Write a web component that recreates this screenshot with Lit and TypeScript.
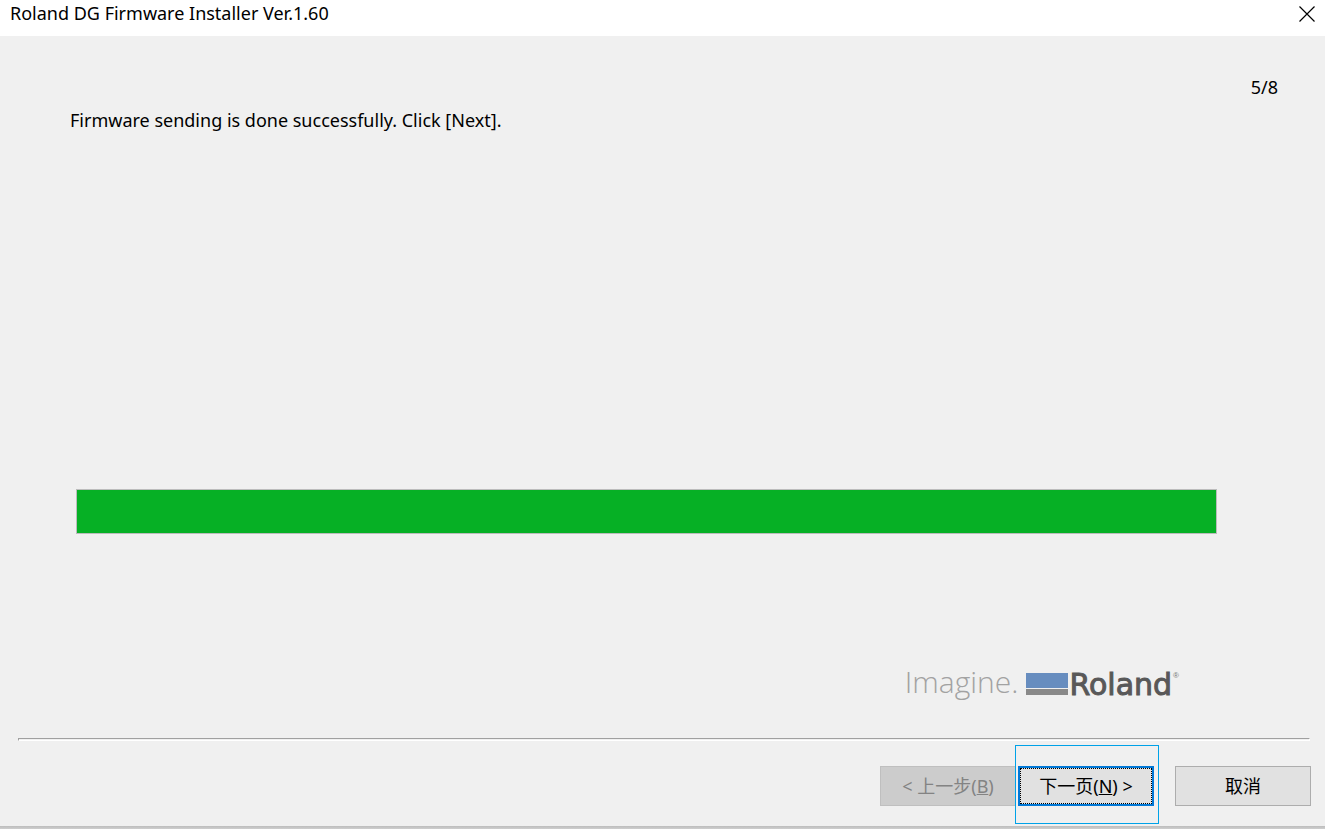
import { LitElement, html, css } from "lit";
import { customElement, property } from "lit/decorators.js";

@customElement("roland-logo")
class RolandLogo extends LitElement {
  static styles = css`
    :host { display: flex; align-items: center; gap: 8px; height: 44px; }
    .slogan { font: 300 30px/42px "Open Sans", sans-serif; color: #a2a2a2; }
    .brand { display: flex; align-items: center; gap: 1px; }
    .flag { width: 42px; height: 22px; display: block; margin-top: 4px; }
    .name { font: 30px/44px "DejaVu Sans", sans-serif; color: #585858; -webkit-text-stroke: 1px #585858; margin-top: 6px; }
    .mark { font: 8px/10px "Liberation Sans", sans-serif; color: #777; align-self: flex-start; margin-top: 14px; }
  `;
  render() {
    return html`
      <span class="slogan">Imagine.</span>
      <span class="brand">
        <svg class="flag" viewBox="0 0 42 22" aria-hidden="true">
          <rect width="42" height="15" fill="#678dbf"></rect>
          <rect y="16" width="42" height="6" fill="#898989"></rect>
        </svg>
        <span class="name">Roland</span>
        <span class="mark">®</span>
      </span>
    `;
  }
}

@customElement("app-root")
class AppRoot extends LitElement {
  @property({ type: Number }) step = 5;
  @property({ type: Number }) steps = 8;
  @property({ type: Number }) progress = 100;

  static styles = css`
    :host {
      display: flex; flex-direction: column; min-height: 100vh; box-sizing: border-box;
      background: #f0f0f0; color: #000;
      font: 18px/24px "Noto Sans", "Noto Sans CJK SC", sans-serif;
    }
    * { box-sizing: border-box; }
    .titlebar { display: flex; justify-content: space-between; height: 36px; padding: 2px 10px 0; background: #fff; }
    .title { margin: 0; font-size: 18px; line-height: 22px; font-weight: 400; }
    .close { width: 16px; height: 24px; padding: 0; border: 0; background: none; display: grid; place-items: center; }
    .close svg { display: block; }
    .page { flex: 1; display: flex; flex-direction: column; padding: 39px 47px 0 70px; }
    .count { margin: 0; text-align: right; }
    .message { margin: 9px 0 0; }
    .bar {
      appearance: none; display: block; width: auto; height: 45px; margin: auto 61px 126px 6px;
      border: 1px solid #bcbcbc; background: #e6e6e6;
    }
    .bar::-webkit-progress-bar { background: #e6e6e6; }
    .bar::-webkit-progress-value { background: #06b025; }
    .logo { align-self: flex-end; margin: 0 99px 34px 0; }
    .rule { height: 3px; margin: 0 15px 0 18px; border: solid; border-width: 1px; border-color: #a0a0a0 #fff #fff #a0a0a0; }
    .buttons { display: flex; justify-content: flex-end; padding: 25px 14px 20px; }
    .btn {
      display: block; width: 136px; height: 40px; padding: 0; border: 1px solid #adadad; border-radius: 0;
      background: #e1e1e1; color: #000; font: inherit;
    }
    .btn:disabled { border-color: #bfbfbf; background: #ccc; color: #838383; }
    .highlight { position: relative; margin: 0 21px 0 2px; }
    .highlight::before { content: ""; position: absolute; inset: -21px -5px -18px -3px; border: 1px solid #00a2e8; pointer-events: none; }
    .primary { border: 2px solid #0078d7; outline: 1px dotted #000; outline-offset: -3px; }
    .edge { height: 3px; background: linear-gradient(#bdbdbd, #cecece); }
  `;

  render() {
    return html`
      <header class="titlebar">
        <h1 class="title">Roland DG Firmware Installer Ver.1.60</h1>
        <button class="close" aria-label="Close">
          <svg width="16" height="16" viewBox="0 0 16 16" fill="none" stroke="#000" stroke-width="1.2">
            <path d="M.5 .5 15.5 15.5M15.5 .5 .5 15.5"></path>
          </svg>
        </button>
      </header>
      <main class="page">
        <p class="count">${this.step}/${this.steps}</p>
        <p class="message" id="message">Firmware sending is done successfully. Click [Next].</p>
        <progress class="bar" max="100" .value=${this.progress} aria-labelledby="message"></progress>
        <roland-logo class="logo"></roland-logo>
      </main>
      <div class="rule"></div>
      <footer class="buttons">
        <button class="btn" disabled>&lt; 上一步(<u>B</u>)</button>
        <div class="highlight"><button class="btn primary">下一页(<u>N</u>) &gt;</button></div>
        <button class="btn">取消</button>
      </footer>
      <div class="edge"></div>
    `;
  }
}
